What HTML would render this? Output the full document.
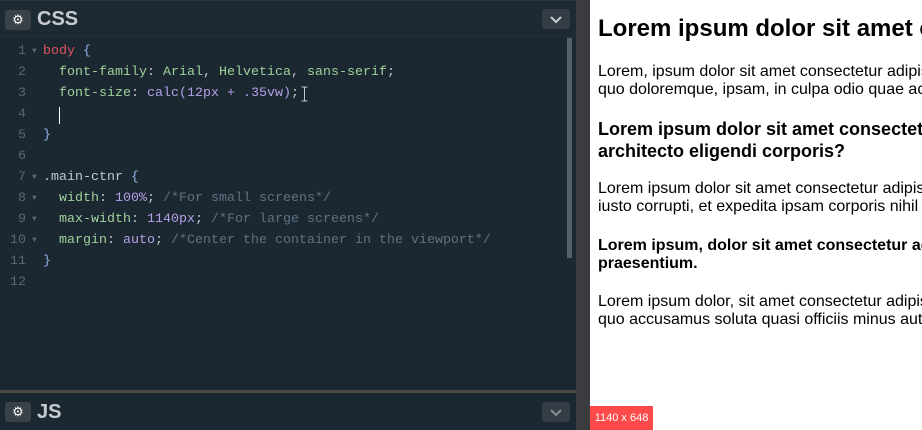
<!DOCTYPE html>
<html><head><style>
*{margin:0;padding:0;box-sizing:border-box}
body{width:922px;height:430px;overflow:hidden;background:#fff;position:relative;font-family:"Liberation Sans",Arial,sans-serif}
.ed{position:absolute;left:0;top:0;width:576px;height:430px;background:#1b2731}
.hdr{position:absolute;left:0;width:576px;height:36px;background:#1d2a33}
.gear{position:absolute;left:5px;width:26px;height:20px;background:#3a4249;border-radius:3px;color:#fff;font-size:13px;text-align:center;line-height:20px}
.ttl{position:absolute;left:37px;color:#c8ccd0;font-size:20px;font-weight:bold}
.btn{position:absolute;left:542px;width:28px;height:20px;background:#343d45;border-radius:3px}
.code{position:absolute;left:0;top:41px;font-family:"Liberation Mono",monospace;font-size:13.33px;line-height:21px;white-space:pre}
.ln{position:absolute;left:0;width:26px;text-align:right;color:#5d666e}
.ar{position:absolute;left:32px;color:#5d666e;font-size:8px}
.tx{position:absolute;left:43px}
.r{color:#e0505e}.b{color:#8fb4e6}.g{color:#9ed19a}.p{color:#b4a0e6}.c{color:#5f7282}.w{color:#c0c8cf}
.bar{position:absolute;left:576px;top:0;width:14px;height:430px;background:#3c3c40}
.pvw{position:absolute;left:590px;top:0;width:332px;height:430px;overflow:hidden}
.pv{position:absolute;left:8px;white-space:nowrap;color:#000}
</style></head><body>
<div class="ed">
 <div style="position:absolute;left:0;top:0;width:576px;height:2px;background:#333"></div>
 <div class="hdr" style="top:1px;border-bottom:1px solid #243039"><div class="gear" style="top:9px">⚙</div><div class="ttl" style="top:7px">CSS</div><div class="btn" style="top:8px"><svg width="28" height="20"><path d="M9 8l5 5 5-5" stroke="#c8ccd0" stroke-width="2" fill="none"/></svg></div></div>
 <div style="position:absolute;left:567px;top:38px;width:5px;height:220px;background:#56606a"></div>
 <div class="code">
  <div style="position:absolute;top:0"><span class="ln">1</span><span class="ar">▼</span><span class="tx"><span class="r">body</span> <span class="b">{</span></span></div>
  <div style="position:absolute;top:21px"><span class="ln">2</span><span class="tx">  <span class="g">font-family</span><span class="w">:</span> <span class="g">Arial</span><span class="w">,</span> <span class="g">Helvetica</span><span class="w">,</span> <span class="g">sans-serif</span><span class="w">;</span></span></div>
  <div style="position:absolute;top:42px"><span class="ln">3</span><span class="tx">  <span class="g">font-size</span><span class="w">:</span> <span class="p">calc(12px + .35vw)</span><span class="w">;</span></span><svg style="position:absolute;left:301px;top:3px" width="7" height="16"><path d="M0.5 1h6M0.5 15h6M3.5 1v14" stroke="#c0c8cf" stroke-width="1" fill="none"/></svg></div>
  <div style="position:absolute;top:63px"><span class="ln">4</span><span style="position:absolute;left:59px;top:3px;width:1px;height:17px;background:#fff"></span></div>
  <div style="position:absolute;top:84px"><span class="ln">5</span><span class="tx"><span class="b">}</span></span></div>
  <div style="position:absolute;top:105px"><span class="ln">6</span></div>
  <div style="position:absolute;top:126px"><span class="ln">7</span><span class="ar">▼</span><span class="tx"><span class="w">.main-ctnr</span> <span class="b">{</span></span></div>
  <div style="position:absolute;top:147px"><span class="ln">8</span><span class="ar">▼</span><span class="tx">  <span class="g">width</span><span class="w">:</span> <span class="p">100%</span><span class="w">;</span> <span class="c">/*For small screens*/</span></span></div>
  <div style="position:absolute;top:168px"><span class="ln">9</span><span class="ar">▼</span><span class="tx">  <span class="g">max-width</span><span class="w">:</span> <span class="p">1140px</span><span class="w">;</span> <span class="c">/*For large screens*/</span></span></div>
  <div style="position:absolute;top:189px"><span class="ln">10</span><span class="ar">▼</span><span class="tx">  <span class="g">margin</span><span class="w">:</span> <span class="p">auto</span><span class="w">;</span> <span class="c">/*Center the container in the viewport*/</span></span></div>
  <div style="position:absolute;top:210px"><span class="ln">11</span><span class="tx"><span class="b">}</span></span></div>
  <div style="position:absolute;top:231px"><span class="ln">12</span></div>
 </div>
 <div style="position:absolute;left:0;top:390px;width:576px;height:3px;background:#4a4a42"></div>
 <div class="hdr" style="top:393px;background:#1b2731"><div class="gear" style="top:9px">⚙</div><div class="ttl" style="top:8px">JS</div><div class="btn" style="top:9px"><svg width="28" height="20"><path d="M9 8l5 5 5-5" stroke="#8a9096" stroke-width="2" fill="none"/></svg></div></div>
</div>
<div class="bar"></div>
<div class="pvw">
<div class="pv" style="top:15px;font-size:24px;font-weight:bold">Lorem ipsum dolor sit amet consectetur</div>
<div class="pv" style="top:63px;font-size:16px;line-height:18px">Lorem, ipsum dolor sit amet consectetur adipisicing elit.<br>quo doloremque, ipsam, in culpa odio quae accusamus</div>
<div class="pv" style="top:118px;font-size:18px;font-weight:bold;line-height:22px">Lorem ipsum dolor sit amet consectetur adipisicing<br>architecto eligendi corporis?</div>
<div class="pv" style="top:180px;font-size:16px;line-height:18px">Lorem ipsum dolor sit amet consectetur adipisicing elit.<br>iusto corrupti, et expedita ipsam corporis nihil</div>
<div class="pv" style="top:237px;font-size:16px;font-weight:bold;line-height:18px">Lorem ipsum, dolor sit amet consectetur adipisicing<br>praesentium.</div>
<div class="pv" style="top:293px;font-size:16px;line-height:18px">Lorem ipsum dolor, sit amet consectetur adipisicing elit.<br>quo accusamus soluta quasi officiis minus aut</div>
<div style="position:absolute;left:0;top:406px;width:63px;height:24px;background:#ff4a4a;color:#fff;font-size:11px;line-height:24px;text-align:center">1140 x 648</div>
</div>
</body></html>
